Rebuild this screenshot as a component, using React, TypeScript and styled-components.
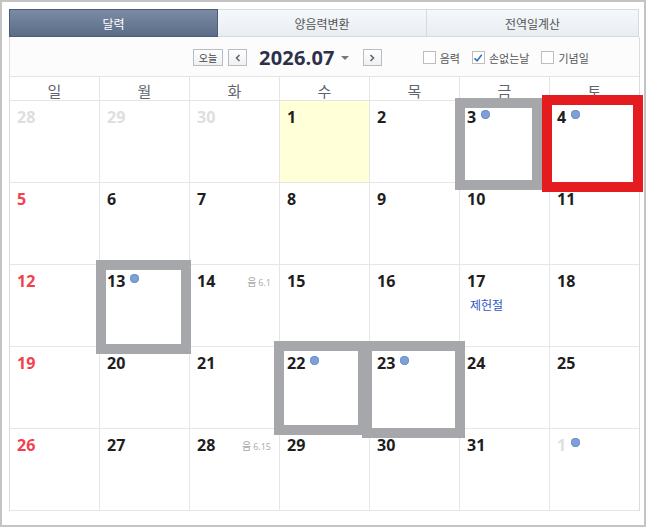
import styled, { createGlobalStyle, css } from "styled-components";

const GlobalStyle = createGlobalStyle`
  html, body {
    margin: 0;
    background: #fff;
    font-family: "Noto Sans CJK KR", "Noto Sans", sans-serif;
  }
`;

type Day = {
  n: number;
  kind?: "sun" | "other";
  today?: boolean;
  dot?: boolean;
  lunar?: string;
  holiday?: string;
  mark?: { l: number; t: number; w: number; h: number; red?: boolean };
};

const weekNames = ["일", "월", "화", "수", "목", "금", "토"];

const weeks: Day[][] = [
  [
    { n: 28, kind: "other" },
    { n: 29, kind: "other" },
    { n: 30, kind: "other" },
    { n: 1, today: true },
    { n: 2 },
    { n: 3, dot: true, mark: { l: -5, t: -3, w: 87, h: 92 } },
    { n: 4, dot: true, mark: { l: -8, t: -6, w: 101, h: 97, red: true } },
  ],
  [{ n: 5, kind: "sun" }, { n: 6 }, { n: 7 }, { n: 8 }, { n: 9 }, { n: 10 }, { n: 11 }],
  [
    { n: 12, kind: "sun" },
    { n: 13, dot: true, mark: { l: -4, t: -5, w: 95, h: 94 } },
    { n: 14, lunar: "6.1" },
    { n: 15 },
    { n: 16 },
    { n: 17, holiday: "제헌절" },
    { n: 18 },
  ],
  [
    { n: 19, kind: "sun" },
    { n: 20 },
    { n: 21 },
    { n: 22, dot: true, mark: { l: -6, t: -6, w: 94, h: 94 } },
    { n: 23, dot: true, mark: { l: -8, t: -6, w: 103, h: 97 } },
    { n: 24 },
    { n: 25 },
  ],
  [
    { n: 26, kind: "sun" },
    { n: 27 },
    { n: 28, lunar: "6.15" },
    { n: 29 },
    { n: 30 },
    { n: 31 },
    { n: 1, kind: "other", dot: true },
  ],
];

export default function App() {
  return (
    <>
      <GlobalStyle />
      <Frame>
        <Tabs>
          <Tab $active>달력</Tab>
          <Tab>양음력변환</Tab>
          <Tab>전역일계산</Tab>
        </Tabs>
        <Panel>
          <Toolbar>
            <SmallButton>오늘</SmallButton>
            <ArrowButton>
              <svg width="6" height="8" viewBox="0 0 6 8">
                <path d="M4.5 1 L1.5 4 L4.5 7" fill="none" stroke="#666" strokeWidth="1.6" />
              </svg>
            </ArrowButton>
            <Title>2026.07</Title>
            <Caret />
            <ArrowButton>
              <svg width="6" height="8" viewBox="0 0 6 8">
                <path d="M1.5 1 L4.5 4 L1.5 7" fill="none" stroke="#666" strokeWidth="1.6" />
              </svg>
            </ArrowButton>
            <Options>
              <Option>
                <Check />
                음력
              </Option>
              <Option>
                <Check>
                  <svg width="10" height="10" viewBox="0 0 10 10">
                    <path d="M1.5 5.2 L4 7.8 L8.8 1.8" fill="none" stroke="#2f6db5" strokeWidth="1.5" />
                  </svg>
                </Check>
                손없는날
              </Option>
              <Option>
                <Check />
                기념일
              </Option>
            </Options>
          </Toolbar>
          <Grid>
            {weekNames.map((w) => (
              <HeadCell key={w}>{w}</HeadCell>
            ))}
            {weeks.map((week, wi) =>
              week.map((d, di) => (
                <Cell key={`${wi}-${di}`} $today={d.today}>
                  <Top>
                    <DateNum $kind={d.kind}>{d.n}</DateNum>
                    {d.dot && <Dot />}
                    {d.lunar && (
                      <Lunar>
                        음<small>{d.lunar}</small>
                      </Lunar>
                    )}
                  </Top>
                  {d.holiday && <Holiday>{d.holiday}</Holiday>}
                  {d.mark && (
                    <Mark
                      $red={d.mark.red}
                      style={{ left: d.mark.l, top: d.mark.t, width: d.mark.w, height: d.mark.h }}
                    />
                  )}
                </Cell>
              ))
            )}
          </Grid>
        </Panel>
      </Frame>
    </>
  );
}

const Frame = styled.div`
  box-sizing: border-box;
  width: 646px;
  height: 527px;
  border: 2px solid #c4c4c4;
  padding: 7px 5px 0 7px;
  background: #fff;
`;

const Tabs = styled.div`
  display: grid;
  grid-template-columns: 209px 209px 1fr;
  height: 28px;
`;

const Tab = styled.div<{ $active?: boolean }>`
  box-sizing: border-box;
  display: flex;
  align-items: center;
  justify-content: center;
  font-size: 12px;
  color: #555;
  background: linear-gradient(#f6f8fb, #e8edf2);
  border: 1px solid #d3dae2;
  border-left: none;
  ${(p) =>
    p.$active &&
    css`
      color: #fff;
      background: linear-gradient(#7b8ba4, #5b6c88);
      border: 1px solid #4e5d76;
    `}
`;

const Panel = styled.div`
  width: 631px;
  box-sizing: border-box;
  border-left: 1px solid #dcdcdc;
  border-right: 1px solid #dcdcdc;
`;

const Toolbar = styled.div`
  height: 40px;
  display: flex;
  align-items: center;
  padding-left: 183px;
  padding-top: 1px;
  box-sizing: border-box;
  background: #fcfcfd;
`;

const SmallButton = styled.div`
  box-sizing: border-box;
  width: 30px;
  height: 17px;
  display: flex;
  align-items: center;
  justify-content: center;
  font-size: 10px;
  color: #444;
  border: 1px solid #b9bcc2;
  background: linear-gradient(#fff, #eef0f3);
`;

const ArrowButton = styled(SmallButton)`
  width: 19px;
  margin-left: 5px;
`;

const Title = styled.div`
  margin-left: 12px;
  font-family: "Open Sans", "Noto Sans", sans-serif;
  font-weight: 700;
  font-size: 20px;
  letter-spacing: 0.2px;
  color: #2c3149;
`;

const Caret = styled.div`
  width: 0;
  height: 0;
  margin: 1px 9px 0 6px;
  border-left: 4px solid transparent;
  border-right: 4px solid transparent;
  border-top: 4px solid #777;
`;

const Options = styled.div`
  display: flex;
  gap: 12px;
  margin-left: 41px;
`;

const Option = styled.div`
  display: flex;
  align-items: center;
  gap: 4px;
  font-size: 11px;
  color: #555;
`;

const Check = styled.span`
  box-sizing: border-box;
  width: 13px;
  height: 13px;
  border: 1px solid #bdbdbd;
  background: #fff;
  display: flex;
  align-items: center;
  justify-content: center;
`;

const Grid = styled.div`
  display: grid;
  grid-template-columns: 89px repeat(6, 90px);
  grid-template-rows: 24px repeat(5, 82px);
  border-top: 1px solid #e4e4e4;
  margin-top: -1px;
`;

const HeadCell = styled.div`
  box-sizing: border-box;
  display: flex;
  align-items: center;
  justify-content: center;
  padding-top: 3px;
  font-size: 15px;
  color: #5f6470;
  border-left: 1px solid #e4e4e4;
  border-bottom: 1px solid #e4e4e4;
  &:first-child {
    border-left: none;
  }
`;

const Cell = styled.div<{ $today?: boolean }>`
  position: relative;
  box-sizing: border-box;
  padding: 5px 7px 0 7px;
  border-left: 1px solid #e6e6e6;
  border-bottom: 1px solid #e6e6e6;
  background: ${(p) => (p.$today ? "#ffffd8" : "#fff")};
  &:nth-child(7n + 1) {
    border-left: none;
  }
`;

const Top = styled.div`
  display: flex;
  align-items: center;
  height: 22px;
`;

const DateNum = styled.span<{ $kind?: "sun" | "other" }>`
  font-family: "Open Sans", "Noto Sans", sans-serif;
  font-weight: 700;
  font-size: 16px;
  color: ${(p) => (p.$kind === "sun" ? "#f4404c" : p.$kind === "other" ? "#dedede" : "#1e1e1e")};
`;

const Dot = styled.span`
  width: 9px;
  height: 9px;
  border-radius: 50%;
  margin: -5px 0 0 5px;
  background: #7f9fd7;
  box-shadow: inset 0 0 0 1px #7092cc;
`;

const Lunar = styled.span`
  margin-left: auto;
  margin-right: 1px;
  font-size: 10px;
  color: #a8a8a8;
  small {
    font-family: "Open Sans", "Noto Sans", sans-serif;
    font-size: 9px;
    margin-left: 2px;
  }
`;

const Holiday = styled.div`
  margin: 4px 0 0 3px;
  font-size: 12px;
  color: #2f55c6;
`;

const Mark = styled.div<{ $red?: boolean }>`
  position: absolute;
  box-sizing: border-box;
  z-index: 2;
  border: 10px solid ${(p) => (p.$red ? "#e41c1f" : "#a6a7aa")};
  pointer-events: none;
`;
